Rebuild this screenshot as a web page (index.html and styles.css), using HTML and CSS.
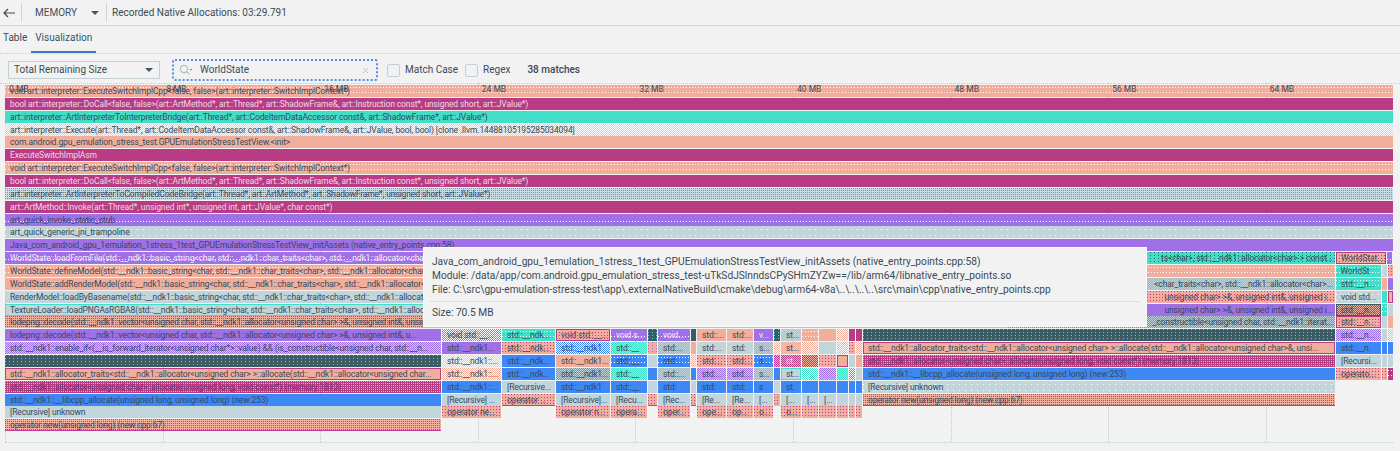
FILE: index.html
```html
<!DOCTYPE html>
<html lang="en">
<head>
<meta charset="utf-8">
<title>Memory profiler</title>
<link rel="stylesheet" href="styles.css">
</head>
<body>
<header class="topbar">
  <svg class="back" width="12" height="10" viewBox="0 0 12 10"><path d="M5 1 1 5l4 4M1 5h11" fill="none" stroke="#3d4f5c" stroke-width="1.2"/></svg>
  <span class="sep first"></span>
  <span class="session">MEMORY</span>
  <span class="caret"></span>
  <span class="sep"></span>
  <span class="recording">Recorded Native Allocations: 03:29.791</span>
</header>
<nav class="tabs">
  <span class="tab">Table</span>
  <span class="tab active">Visualization</span>
</nav>
<section class="filters">
  <div class="select"><span>Total Remaining Size</span><span class="caret"></span></div>
  <div class="search">
    <svg class="lens" width="14" height="12" viewBox="0 0 14 12"><circle cx="5" cy="5" r="3.6" fill="none" stroke="#a9bcc4" stroke-width="1.1"/><path d="m7.6 7.6 2.6 2.6" stroke="#a9bcc4" stroke-width="1.1"/><path d="M10.5 5h3l-1.5 1.5z" fill="#6f818b"/></svg>
    <span class="query">WorldState</span>
    <svg class="clear" width="7" height="7" viewBox="0 0 7 7"><path d="m1 1 5 5M6 1 1 6" stroke="#b5c4ca" stroke-width="1"/></svg>
  </div>
  <label class="check"><span class="box"></span>Match Case</label>
  <label class="check regex"><span class="box"></span>Regex</label>
  <strong class="count">38 matches</strong>
</section>
<main class="chart">
  <div class="lines"><i></i><i></i><i></i><i></i><i></i><i></i><i></i><i></i><i></i></div>
  <div class="rows">
    <div class="row"><div class="c sa dot dw" style="width:1388px">void art::interpreter::ExecuteSwitchImplCpp&lt;false, false&gt;(art::interpreter::SwitchImplContext*)</div></div>
    <div class="row"><div class="c ma" style="width:1388px">bool art::interpreter::DoCall&lt;false, false&gt;(art::ArtMethod*, art::Thread*, art::ShadowFrame&amp;, art::Instruction const*, unsigned short, art::JValue*)</div></div>
    <div class="row"><div class="c te" style="width:1388px">art::interpreter::ArtInterpreterToInterpreterBridge(art::Thread*, art::CodeItemDataAccessor const&amp;, art::ShadowFrame*, art::JValue*)</div></div>
    <div class="row"><div class="c li chk dw" style="width:1388px">art::interpreter::Execute(art::Thread*, art::CodeItemDataAccessor const&amp;, art::ShadowFrame&amp;, art::JValue, bool, bool) [clone .llvm.14488105195285034094]</div></div>
    <div class="row"><div class="c sa" style="width:1388px">com.android.gpu_emulation_stress_test.GPUEmulationStressTestView.&lt;init&gt;</div></div>
    <div class="row"><div class="c ma" style="width:1388px">ExecuteSwitchImplAsm</div></div>
    <div class="row"><div class="c sa dot dw" style="width:1388px">void art::interpreter::ExecuteSwitchImplCpp&lt;false, false&gt;(art::interpreter::SwitchImplContext*)</div></div>
    <div class="row"><div class="c ma" style="width:1388px">bool art::interpreter::DoCall&lt;false, false&gt;(art::ArtMethod*, art::Thread*, art::ShadowFrame&amp;, art::Instruction const*, unsigned short, art::JValue*)</div></div>
    <div class="row"><div class="c mix dot dense dp" style="width:1388px">art::interpreter::ArtInterpreterToCompiledCodeBridge(art::Thread*, art::ArtMethod*, art::ShadowFrame*, unsigned short, art::JValue*)</div></div>
    <div class="row"><div class="c ma" style="width:1388px">art::ArtMethod::Invoke(art::Thread*, unsigned int*, unsigned int, art::JValue*, char const*)</div></div>
    <div class="row"><div class="c pu dot dw" style="width:1388px">art_quick_invoke_static_stub</div></div>
    <div class="row"><div class="c li dot dw" style="width:1388px">art_quick_generic_jni_trampoline</div></div>
    <div class="row"><div class="c pu" style="width:1388px">Java_com_android_gpu_1emulation_1stress_1test_GPUEmulationStressTestView_initAssets (native_entry_points.cpp:58)</div></div>

    <div class="row">
      <div class="c pu dot dw lt" style="width:1000px">WorldState::loadFromFile(std::__ndk1::basic_string&lt;char, std::__ndk1::char_traits&lt;char&gt;, std::__ndk1::allocator&lt;char&gt; &gt; const&amp;)</div>
      <div class="c te dot dk rt" style="width:329px">ts&lt;char&gt;, std::__ndk1::allocator&lt;char&gt; &gt; const...</div>
      <div class="c sa dot dm ol" style="width:50px">WorldStat...</div>
      <div class="c pu dot dw" style="width:4px"></div>
    </div>
    <div class="row">
      <div class="c sa dot dw" style="width:1329.5px">WorldState::defineModel(std::__ndk1::basic_string&lt;char, std::__ndk1::char_traits&lt;char&gt;, std::__ndk1::allocator&lt;char&gt; &gt; const&amp;)</div>
      <div class="c te dot dw" style="width:45px">WorldSt</div>
      <div class="c li dot dw" style="width:4px"></div>
      <div class="c sa dot dm" style="width:4px"></div>
    </div>
    <div class="row">
      <div class="c sa" style="width:1000px">WorldState::addRenderModel(std::__ndk1::basic_string&lt;char, std::__ndk1::char_traits&lt;char&gt;, std::__ndk1::allocator&lt;char&gt; &gt; const&amp;)</div>
      <div class="c li chk dt rt" style="width:329px">&lt;char_traits&lt;char&gt;, std::__ndk1::allocator&lt;char&gt;...</div>
      <div class="c te dot dw" style="width:45px">std::__n...</div>
      <div class="c sa" style="width:4px"></div>
      <div class="c pu" style="width:4px"></div>
    </div>
    <div class="row">
      <div class="c li" style="width:1000px">RenderModel::loadByBasename(std::__ndk1::basic_string&lt;char, std::__ndk1::char_traits&lt;char&gt;, std::__ndk1::allocator&lt;char&gt; &gt; const&amp;)</div>
      <div class="c sa dot dm rt" style="width:329px">unsigned char&gt; &gt;&amp;, unsigned int&amp;, unsigned i...</div>
      <div class="c li dot dw" style="width:45px">void std...</div>
      <div class="c te" style="width:4px"></div>
      <div class="c sa ol" style="width:4px"></div>
    </div>
    <div class="row">
      <div class="c li olt" style="width:1000px">TextureLoader::loadPNGAsRGBA8(std::__ndk1::basic_string&lt;char, std::__ndk1::char_traits&lt;char&gt;, std::__ndk1::allocator&lt;char&gt; &gt; const&amp;)</div>
      <div class="c pu rt" style="width:329px">unsigned char&gt; &gt;&amp;, unsigned int&amp;, unsigned i...</div>
      <div class="c sa chk dd old" style="width:45px">std::__n...</div>
      <div class="c te dot dw" style="width:4px"></div>
      <div class="c li" style="width:4px"></div>
    </div>
    <div class="row">
      <div class="c sa dot dense dm" style="width:1000px">lodepng::decode(std::__ndk1::vector&lt;unsigned char, std::__ndk1::allocator&lt;unsigned char&gt; &gt;&amp;, unsigned int&amp;, unsigned int&amp;)</div>
      <div class="c li chk dp rt" style="width:329px">_constructible&lt;unsigned char, std::__ndk1::iterat...</div>
      <div class="c sa dot dm ol" style="width:45px">std::__n...</div>
      <div class="c li" style="width:4px"></div>
      <div class="c sa" style="width:4px"></div>
    </div>

    <div class="row">
      <div class="c pu" style="width:436px">lodepng::decode(std::__ndk1::vector&lt;unsigned char, std::__ndk1::allocator&lt;unsigned char&gt; &gt;&amp;, unsigned int&amp;, u...</div>
      <div class="c pu chk dw" style="width:59px">void std::__...</div>
      <div class="c te dot dw" style="width:53px">std::__ndk...</div>
      <div class="c sa dot dm ol" style="width:54px">void std::__...</div>
      <div class="c pu dot dw lt" style="width:36px">void s...</div>
      <div class="c da dot dt" style="width:9px"></div>
      <div class="c pu dot dw lt" style="width:32px">void...</div>
      <div class="c da" style="width:5px"></div>
      <div class="c sa" style="width:29px">std::...</div>
      <div class="c sa" style="width:26px">std:...</div>
      <div class="c pu lt" style="width:19px">v...</div>
      <div class="c da dot dt" style="width:6px"></div>
      <div class="c li chk ds" style="width:20px">st...</div>
      <div class="c sa dot dw" style="width:16px"></div>
      <div class="c sa" style="width:17px"></div>
      <div class="c sa chk dw" style="width:11px"></div>
      <div class="c ma" style="width:6px"></div>
      <div class="c ma" style="width:6px"></div>
      <div class="c da dot dt" style="width:472px"></div>
      <div class="c li chk dp" style="width:45px">std::__n...</div>
      <div class="c li" style="width:4px"></div>
      <div class="c sa chk dw" style="width:4px"></div>
    </div>
    <div class="row">
      <div class="c li chk dp" style="width:436px">std::__ndk1::enable_if&lt;(__is_forward_iterator&lt;unsigned char*&gt;::value) &amp;&amp; (is_constructible&lt;unsigned char, std::__n...</div>
      <div class="c pu" style="width:59px">std::__ndk1...</div>
      <div class="c sa dot dm" style="width:53px">std::__ndk...</div>
      <div class="c bl chk dw" style="width:54px">std::__ndk1</div>
      <div class="c li chk dt" style="width:36px">std::__</div>
      <div class="c sa dot dp" style="width:9px"></div>
      <div class="c li chk dt" style="width:32px">std:...</div>
      <div class="c sa" style="width:5px"></div>
      <div class="c li" style="width:29px">std:...</div>
      <div class="c li" style="width:26px">std:</div>
      <div class="c li chk dt" style="width:19px">s...</div>
      <div class="c sa chk dw" style="width:6px"></div>
      <div class="c li chk ds" style="width:20px">st...</div>
      <div class="c sa chk dw" style="width:16px"></div>
      <div class="c li" style="width:17px"></div>
      <div class="c sa chk dw" style="width:11px"></div>
      <div class="c sa dot dm" style="width:6px"></div>
      <div class="c sa chk dw" style="width:6px"></div>
      <div class="c sa ol" style="width:472px">std::__ndk1::allocator_traits&lt;std::__ndk1::allocator&lt;unsigned char&gt; &gt;::allocate(std::__ndk1::allocator&lt;unsigned char&gt;&amp;, unsi...</div>
      <div class="c bl" style="width:45px">std::__n.</div>
      <div class="c bl" style="width:4px"></div>
      <div class="c bl" style="width:4px"></div>
    </div>
    <div class="row">
      <div class="c da dot dt" style="width:436px"></div>
      <div class="c li chk dw" style="width:59px">std::__ndk1::...</div>
      <div class="c bl" style="width:53px">std::__ndk...</div>
      <div class="c sa" style="width:54px">std::__ndk1...</div>
      <div class="c bl dot dw" style="width:36px">std::__</div>
      <div class="c li" style="width:9px"></div>
      <div class="c bl dot dw" style="width:32px">std:...</div>
      <div class="c sa chk dw" style="width:5px"></div>
      <div class="c sa dot dm" style="width:29px">std:...</div>
      <div class="c sa dot dm" style="width:26px">std:...</div>
      <div class="c bl dot dw" style="width:19px">s...</div>
      <div class="c sa chk dm" style="width:6px"></div>
      <div class="c ma chk ds" style="width:20px">st...</div>
      <div class="c ma chk ds" style="width:16px"></div>
      <div class="c sa dot dm" style="width:17px"></div>
      <div class="c sa ol" style="width:11px"></div>
      <div class="c li" style="width:6px"></div>
      <div class="c sa" style="width:6px"></div>
      <div class="c ma dot dense ds dim" style="width:472px">std::__ndk1::allocator&lt;unsigned char&gt;::allocate(unsigned long, void const*) (memory:1813)</div>
      <div class="c li" style="width:45px">[Recursi...</div>
      <div class="c li" style="width:4px"></div>
      <div class="c li" style="width:4px"></div>
    </div>
    <div class="row">
      <div class="c sa ol" style="width:436px">std::__ndk1::allocator_traits&lt;std::__ndk1::allocator&lt;unsigned char&gt; &gt;::allocate(std::__ndk1::allocator&lt;unsigned char...</div>
      <div class="c sa chk dw" style="width:59px">std::__ndk1::...</div>
      <div class="c bl" style="width:53px">std::__ndk...</div>
      <div class="c li chk dp" style="width:54px">std::__ndk1...</div>
      <div class="c li chk dt" style="width:36px">std::__</div>
      <div class="c bl" style="width:9px"></div>
      <div class="c li chk dt" style="width:32px">std::...</div>
      <div class="c bl" style="width:5px"></div>
      <div class="c li chk dp" style="width:29px">std:...</div>
      <div class="c li chk dp" style="width:26px">std:...</div>
      <div class="c li chk dt" style="width:19px">s...</div>
      <div class="c bl" style="width:6px"></div>
      <div class="c li olt" style="width:20px">st...</div>
      <div class="c te chk dw" style="width:16px"></div>
      <div class="c li chk dp" style="width:17px"></div>
      <div class="c li chk dt" style="width:11px"></div>
      <div class="c pu chk dw" style="width:6px"></div>
      <div class="c li" style="width:6px"></div>
      <div class="c bl" style="width:472px">std::__ndk1::__libcpp_allocate(unsigned long, unsigned long) (new:253)</div>
      <div class="c sa dot dm" style="width:45px">operato...</div>
      <div class="c sa dot dm" style="width:4px"></div>
      <div class="c ma dot dw" style="width:4px"></div>
    </div>
    <div class="row">
      <div class="c ma dot dense ds dim" style="width:436px">std::__ndk1::allocator&lt;unsigned char&gt;::allocate(unsigned long, void const*) (memory:1813)</div>
      <div class="c bl" style="width:59px">std::__ndk1::...</div>
      <div class="c li" style="width:53px">[Recursive...</div>
      <div class="c bl" style="width:54px">std::__ndk1</div>
      <div class="c bl" style="width:36px">std::__</div>
      <div class="c li" style="width:9px"></div>
      <div class="c bl" style="width:32px">std:</div>
      <div class="c li" style="width:5px"></div>
      <div class="c bl" style="width:29px">std:</div>
      <div class="c bl" style="width:26px">std: .</div>
      <div class="c bl" style="width:19px">s</div>
      <div class="c li" style="width:6px"></div>
      <div class="c bl" style="width:20px">st.</div>
      <div class="c bl" style="width:16px"></div>
      <div class="c bl" style="width:17px"></div>
      <div class="c bl" style="width:11px"></div>
      <div class="c bl" style="width:6px"></div>
      <div class="c bl" style="width:6px"></div>
      <div class="c li dot dw" style="width:472px">[Recursive] unknown</div>
    </div>
    <div class="row">
      <div class="c bl" style="width:436px">std::__ndk1::__libcpp_allocate(unsigned long, unsigned long) (new:253)</div>
      <div class="c li" style="width:59px">[Recursive] ...</div>
      <div class="c sa dot dm ob" style="width:53px">operator ...</div>
      <div class="c li" style="width:54px">[Recursive]...</div>
      <div class="c li" style="width:36px">[Recu...</div>
      <div class="c sa dot dm ob" style="width:9px"></div>
      <div class="c li" style="width:32px">[Rec...</div>
      <div class="c sa dot dm ob" style="width:5px"></div>
      <div class="c li" style="width:29px">[Re...</div>
      <div class="c li" style="width:26px">[Re...</div>
      <div class="c li" style="width:19px">[...</div>
      <div class="c sa dot dm" style="width:6px"></div>
      <div class="c li" style="width:20px">[...</div>
      <div class="c li" style="width:16px">[...</div>
      <div class="c li" style="width:17px">[...</div>
      <div class="c li" style="width:11px"></div>
      <div class="c li" style="width:6px"></div>
      <div class="c li" style="width:6px"></div>
      <div class="c sa dot dense dm ob" style="width:472px">operator new(unsigned long) (new.cpp:67)</div>
    </div>
    <div class="row">
      <div class="c li" style="width:436px">[Recursive] unknown</div>
      <div class="c sa dot dm" style="width:59px">operator ne...</div>
      <div class="c" style="width:53px"></div>
      <div class="c sa dot dm" style="width:54px">operator n...</div>
      <div class="c sa dot dm" style="width:36px">opera...</div>
      <div class="c" style="width:9px"></div>
      <div class="c sa dot dm" style="width:32px">oper...</div>
      <div class="c" style="width:5px"></div>
      <div class="c sa dot dm" style="width:29px">ope...</div>
      <div class="c sa dot dm" style="width:26px">op...</div>
      <div class="c sa dot dm" style="width:19px">o...</div>
      <div class="c" style="width:6px"></div>
      <div class="c sa dot dm" style="width:20px">o...</div>
      <div class="c sa dot dm" style="width:16px"></div>
      <div class="c sa dot dm" style="width:17px"></div>
      <div class="c sa dot dm" style="width:11px"></div>
      <div class="c sa dot dm" style="width:6px"></div>
      <div class="c sa dot dm" style="width:6px"></div>
    </div>
    <div class="row"><div class="c sa dot dense dm ob" style="width:436px">operator new(unsigned long) (new.cpp:67)</div></div>
  </div>
  <div class="ticks"><span>0 MB</span><span>8 MB</span><span>16 MB</span><span>24 MB</span><span>32 MB</span><span>40 MB</span><span>48 MB</span><span>56 MB</span><span>64 MB</span></div>
  <aside class="tooltip">
    <p>Java_com_android_gpu_1emulation_1stress_1test_GPUEmulationStressTestView_initAssets (native_entry_points.cpp:58)</p>
    <p>Module: /data/app/com.android.gpu_emulation_stress_test-uTkSdJSlnndsCPySHmZYZw==/lib/arm64/libnative_entry_points.so</p>
    <p>File: C:\src\gpu-emulation-stress-test\app\.externalNativeBuild\cmake\debug\arm64-v8a\..\..\..\..\src\main\cpp\native_entry_points.cpp</p>
    <hr>
    <p>Size: 70.5 MB</p>
  </aside>
</main>
</body>
</html>
```
FILE: styles.css
```css
* { box-sizing: border-box; }
html, body { margin: 0; height: 451px; overflow: hidden; }
body {
  background: #f2f2f2;
  color: #3a4a55;
  font: 10px/14px Roboto, "Noto Sans", sans-serif;
}
.topbar {
  height: 26px;
  display: flex;
  align-items: center;
  border-bottom: 1px solid #c8d6da;
}
.back { margin-left: 3px; }
.sep { width: 1px; height: 19px; background: #c8d6da; margin: 0 5px 0 5px; }
.sep.first { margin: 0 13px 0 6px; }
.session { width: 46px; color: #3f4f5c; }
.caret {
  width: 0;
  height: 0;
  border: 4px solid transparent;
  border-top: 4px solid #46565f;
  border-bottom: 0;
}
.topbar .caret { margin: 0 0 0 10px; }
.topbar .caret + .sep { margin-left: 7px; }
.tabs {
  height: 28px;
  display: flex;
  padding-left: 3px;
  border-bottom: 1px dotted #c0d0d6;
}
.tab { height: 27px; padding-top: 5px; margin-right: 4px; }
.tab.active {
  padding: 5px 4px 0;
  border-bottom: 2px solid #3b78c6;
  color: #33566e;
}
.filters {
  height: 30px;
  display: flex;
  align-items: center;
  padding: 2px 0 0 8px;
}
.select {
  width: 152px;
  height: 18px;
  display: flex;
  align-items: center;
  justify-content: space-between;
  padding: 0 6px 0 5px;
  border: 1px solid #c2d0d6;
}
.search {
  width: 206px;
  height: 22px;
  margin-left: 12px;
  display: flex;
  align-items: center;
  padding-left: 5px;
  border: 2px dotted #4f8fe8;
  border-radius: 3px;
}
.query { margin-left: 7px; flex: 1; color: #35505f; }
.clear { margin-right: 7px; }
.check { display: flex; align-items: center; margin-left: 9px; }
.check.regex { margin-left: 7px; }
.box {
  width: 13px;
  height: 13px;
  margin-right: 5px;
  border: 1px solid #c2d0d6;
  border-radius: 2px;
}
.count { margin-left: 17px; font-weight: 500; }
.chart {
  position: relative;
  height: 367px;
  padding: 0 0 0 5px;
}
.chart::before {
  content: "";
  display: block;
  height: 1px;
  margin: -1px 0 0 -5px;
  border-top: 1px dotted #c0d0d6;
}
.lines {
  position: absolute;
  left: 5px;
  top: 0;
  height: 360px;
  width: 1388px;
  display: flex;
  border-bottom: 1px dotted #c0d0d6;
}
.lines i {
  width: 157.6px;
  border-left: 1px dotted #b4cbd2;
}
.lines i:last-child { width: 127px; }
.rows {
  position: relative;
  display: grid;
  grid-auto-rows: 12.87px;
}
.row { display: flex; gap: 1px; }
.c {
  flex: none;
  height: 12px;
  padding-left: 5px;
  overflow: hidden;
  white-space: nowrap;
  font-size: 8.5px;
  letter-spacing: -0.12px;
  line-height: 13px;
  color: #34495a;
}
.sa { background-color: #f2ae9c; }
.ma { background-color: #b83c84; color: #f0d8e6; }
.te { background-color: #42dfc8; }
.li { background-color: #c2d5da; }
.pu { background-color: #a070e6; }
.bl { background-color: #3e88f6; }
.da { background-color: #3a5c64; }
.mix { background-color: #c9dde6; }
.dot {
  background-image: conic-gradient(at 1px 1px, transparent 75%, var(--d) 0);
  background-size: 4px 3px;
}
.dot.dw { background-size: 3px 5px; background-position: 0 2px; }
.pu.dot.dw { background-size: 3px 12px; background-position: 0 7px; }
.li.dot.dw { background-size: 6px 6px; background-position: 0 3px; }
.dot.dm { background-size: 3px 3px; }
.dot.dense { background-size: 2px 2px; }
.chk {
  background-image: conic-gradient(var(--d) 25%, transparent 0 50%, var(--d) 0 75%, transparent 0);
  background-size: 2px 2px;
}
.dw { --d: #fff; }
.dm { --d: #c8389c; }
.dt { --d: #42dfc8; }
.dp { --d: #a070e6; }
.ds { --d: #f2ae9c; }
.dd { --d: #b83c84; }
.dk { --d: #34605f; }
.lt { color: #f2ecf8; }
.dim { color: #5e3a7a; }
.rt { text-align: right; padding-right: 2px; }
.ol { box-shadow: inset 0 0 0 1px #b83c84; }
.olt { box-shadow: inset 0 0 0 1px #42dfc8; }
.old { box-shadow: inset 0 0 0 1px #3a5c64; }
.ob { box-shadow: inset 0 -1px 0 #c8389c; }
.ticks {
  position: absolute;
  left: 9px;
  top: 0;
  display: flex;
}
.ticks span {
  width: 157.6px;
  font-size: 8.5px;
  line-height: 13px;
  color: #3a4a55;
}
.tooltip {
  position: absolute;
  left: 424px;
  top: 165px;
  width: 722px;
  height: 78px;
  padding: 7px 8px;
  background: #f2f2f2;
  font-size: 10.2px;
  line-height: 14px;
  box-shadow: 0 0 0 1px #fafafa;
}
.tooltip p { margin: 0; white-space: nowrap; }
.tooltip hr {
  margin: 4px -1px;
  border: 0;
  border-top: 1px dotted #c0d0d6;
}
```
